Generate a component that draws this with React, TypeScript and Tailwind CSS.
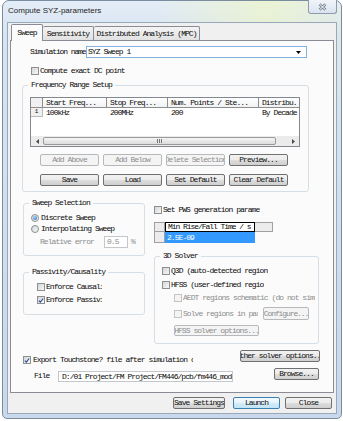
import clsx from "clsx";
import type { ReactNode } from "react";

const BTN = {
  normal:
    "border-[#707070] bg-[linear-gradient(#f2f2f2_0%,#ebebeb_50%,#dddddd_51%,#cfcfcf_100%)] text-[#111]",
  off: "border-[#b5b9bc] bg-[#f4f4f4] text-[#8d8d8d]",
  def: "border-[#3c7fb1] bg-[linear-gradient(#f4fafe_0%,#e5f3fb_50%,#d2ebf9_51%,#c4e4f6_100%)] text-[#111]",
};

function Button({
  label,
  className,
  kind = "normal",
}: {
  label: string;
  className: string;
  kind?: keyof typeof BTN;
}) {
  return (
    <div
      className={clsx(
        "flex shrink-0 items-center justify-center overflow-hidden whitespace-nowrap rounded-[2px] border",
        BTN[kind],
        className
      )}
    >
      {label}
    </div>
  );
}

function Check({ on, off }: { on?: boolean; off?: boolean }) {
  return (
    <span
      className={clsx(
        "flex h-[8px] w-[8px] shrink-0 items-center justify-center border",
        off
          ? "border-[#c2c4c6] bg-[#f4f4f4]"
          : "border-[#8e8f8f] bg-[linear-gradient(135deg,#d2d5da,#f8f8f8)]"
      )}
    >
      {on && (
        <svg viewBox="0 0 8 8" className="h-[7px] w-[7px]">
          <path d="M1.2 4.1 L3.1 6.1 L6.9 1.3" fill="none" stroke="#2b4a9c" strokeWidth="1.5" />
        </svg>
      )}
    </span>
  );
}

function Radio({ on }: { on?: boolean }) {
  return (
    <span className="flex h-[8px] w-[8px] shrink-0 items-center justify-center rounded-full border border-[#8e8f8f] bg-[linear-gradient(135deg,#d2d5da,#f8f8f8)]">
      {on && (
        <span className="h-[4px] w-[4px] rounded-full bg-[radial-gradient(circle_at_40%_35%,#a9dbff,#1b5fb5)]" />
      )}
    </span>
  );
}

function Group({
  title,
  className,
  children,
}: {
  title: string;
  className: string;
  children: ReactNode;
}) {
  return (
    <fieldset className={clsx("flex flex-col items-start rounded-[3px] border border-[#d5dfe5]", className)}>
      <legend className="ml-[5px] px-[3px] leading-[8px]">{title}</legend>
      {children}
    </fieldset>
  );
}

function Clip({ text, className }: { text: string; className: string }) {
  return <span className={clsx("block overflow-hidden whitespace-nowrap", className)}>{text}</span>;
}

function FreqTable() {
  const head = "flex items-center overflow-hidden whitespace-nowrap border-r border-[#8e8e8e] pl-[3px]";
  const cell = "flex items-center overflow-hidden whitespace-nowrap pl-[3px]";
  return (
    <div className="ml-[7px] mt-[8px] flex h-[50px] w-[270px] flex-col overflow-hidden border border-[#828790] bg-white">
      <div className="flex h-[10px] shrink-0 border-b border-[#8e8e8e] bg-[linear-gradient(#ffffff,#f1f2f4)]">
        <div className="w-[12px] shrink-0 border-r border-[#8e8e8e] bg-[#f0f0f0]" />
        <div className={clsx(head, "w-[64px] shrink-0")}>Start Freq...</div>
        <div className={clsx(head, "w-[61px] shrink-0")}>Stop Freq...</div>
        <div className={clsx(head, "w-[91px] shrink-0")}>Num. Points / Ste...</div>
        <div className={clsx(head, "w-[60px] shrink-0")}>Distribu.</div>
      </div>
      <div className="flex h-[9px] shrink-0">
        <div className="flex w-[12px] shrink-0 items-center justify-center border-r border-b border-[#b9b9b9] bg-[#f0f0f0] text-[6px] tracking-normal">
          1
        </div>
        <div className={clsx(cell, "w-[64px] shrink-0")}>100kHz</div>
        <div className={clsx(cell, "w-[61px] shrink-0")}>200MHz</div>
        <div className={clsx(cell, "w-[91px] shrink-0")}>200</div>
        <div className={clsx(cell, "w-[60px] shrink-0")}>By Decade</div>
      </div>
      <div className="flex-1" />
      <div className="flex h-[10px] shrink-0 items-center bg-[#ebebeb]">
        <div className="flex w-[12px] justify-center">
          <svg width="3" height="5" viewBox="0 0 3 5">
            <path d="M3 0v5L0 2.5z" fill="#4a4a4a" />
          </svg>
        </div>
        <div className="flex h-[8px] w-[233px] items-center justify-center gap-[1px] rounded-[2px] border border-[#9a9a9a] bg-[linear-gradient(#f5f5f5,#dcdcdc)]">
          <span className="h-[4px] w-[1px] bg-[#777]" />
          <span className="h-[4px] w-[1px] bg-[#777]" />
          <span className="h-[4px] w-[1px] bg-[#777]" />
        </div>
        <div className="flex-1" />
        <div className="flex w-[12px] justify-center">
          <svg width="3" height="5" viewBox="0 0 3 5">
            <path d="M0 0v5L3 2.5z" fill="#4a4a4a" />
          </svg>
        </div>
      </div>
    </div>
  );
}

function Panel() {
  return (
    <div className="mx-[2px] flex h-[353px] shrink-0 flex-col items-start border border-[#898c95] bg-[#fbfbfb]">
      <div className="ml-[19px] mt-[5px] flex h-[12px] items-center">
        <span className="w-[56px] whitespace-nowrap tracking-[-1.1px]">Simulation name</span>
        <div className="flex h-[12px] w-[221px] items-center justify-between border border-[#85b1de] bg-white pl-[1px] pr-[5px]">
          <span>SYZ Sweep 1</span>
          <svg width="5" height="3" viewBox="0 0 5 3">
            <path d="M0 0h5L2.5 3z" fill="#000" />
          </svg>
        </div>
      </div>

      <div className="ml-[20px] mt-[9px] flex items-center gap-[1px]">
        <Check />
        <span>Compute exact DC point</span>
      </div>

      <Group title="Frequency Range Setup" className="ml-[11px] mt-[6px] h-[111px] w-[287px]">
        <FreqTable />
        <div className="ml-[17px] mt-[7px] flex gap-[4px]">
          <Button label="Add Above" kind="off" className="h-[12px] w-[59px]" />
          <Button label="Add Below" kind="off" className="h-[12px] w-[59px]" />
          <Button label="Delete Selection" kind="off" className="h-[12px] w-[59px]" />
          <Button label="Preview..." className="h-[12px] w-[59px]" />
        </div>
        <div className="ml-[17px] mt-[8px] flex gap-[4px]">
          <Button label="Save" className="h-[12px] w-[59px]" />
          <Button label="Load" className="h-[12px] w-[59px]" />
          <Button label="Set Default" className="h-[12px] w-[59px]" />
          <Button label="Clear Default" className="h-[12px] w-[59px]" />
        </div>
      </Group>

      <div className="ml-[12px] mt-[7px] flex items-start gap-[9px]">
        <div className="flex w-[122px] flex-col">
          <Group title="Sweep Selection" className="h-[57px] w-[122px]">
            <div className="ml-[7px] mt-[7px] flex items-center gap-[2px]">
              <Radio on />
              <span>Discrete Sweep</span>
            </div>
            <div className="ml-[7px] mt-[3px] flex items-center gap-[2px]">
              <Radio />
              <span>Interpolating Sweep</span>
            </div>
            <div className="ml-[16px] mt-[3px] flex h-[12px] items-center text-[#8d8d8d]">
              <span className="w-[64px]">Relative error</span>
              <div className="flex h-[12px] w-[24px] items-center border border-[#c4c7cc] bg-white pl-[2px]">0.5</div>
              <span className="ml-[3px]">%</span>
            </div>
          </Group>
          <Group title="Passivity/Causality" className="mt-[12px] h-[47px] w-[122px]">
            <div className="ml-[13px] mt-[7px] flex items-center gap-[1px]">
              <Check />
              <Clip text="Enforce Causality" className="w-[56px]" />
            </div>
            <div className="ml-[13px] mt-[5px] flex items-center gap-[1px]">
              <Check on />
              <Clip text="Enforce Passivity" className="w-[56px]" />
            </div>
          </Group>
        </div>

        <div className="flex w-[165px] flex-col">
          <div className="mt-[7px] flex items-center gap-[1px]">
            <Check />
            <Clip text="Set PWS generation parameters" className="w-[97px]" />
          </div>
          <div className="mt-[8px] flex flex-col">
            <div className="flex h-[10px]">
              <div className="w-[11px] border border-[#a0a0a0] bg-[#ececec]" />
              <div className="flex w-[90px] items-center whitespace-nowrap border border-black bg-white pl-[2px] tracking-[-1.05px]">
                Min Rise/Fall Time / s
              </div>
              <div className="w-[18px] border-y border-r border-[#a0a0a0] bg-[#ececec]" />
            </div>
            <div className="flex h-[11px]">
              <div className="w-[11px] border-x border-b border-[#a0a0a0] bg-[#ececec]" />
              <div className="flex w-[90px] items-center bg-[#3399ff] pl-[2px] text-white">2.5E-09</div>
            </div>
          </div>
          <Group title="3D Solver" className="mt-[9px] h-[92px] w-[165px]">
            <div className="ml-[7px] mt-[7px] flex items-center gap-[1px]">
              <Check />
              <Clip text="Q3D (auto-detected region)" className="w-[97px]" />
            </div>
            <div className="ml-[7px] mt-[6px] flex items-center gap-[1px]">
              <Check />
              <Clip text="HFSS (user-defined region)" className="w-[93px]" />
            </div>
            <div className="ml-[19px] mt-[5px] flex items-center gap-[1px] text-[#8d8d8d]">
              <Check off />
              <Clip text="AEDT regions schematic (do not simulate)" className="w-[132px]" />
            </div>
            <div className="ml-[19px] mt-[5px] flex h-[13px] items-center text-[#8d8d8d]">
              <Check off />
              <Clip text="Solve regions in parallel" className="ml-[1px] w-[75px]" />
              <Button label="Configure..." kind="off" className="ml-[5px] h-[13px] w-[46px] tracking-[-1.1px]" />
            </div>
            <Button label="HFSS solver options..." kind="off" className="ml-[19px] mt-[5px] h-[11px] w-[85px]" />
          </Group>
        </div>
      </div>

      <div className="ml-[12px] mt-[6px] flex w-[297px] items-start justify-between">
        <div className="mt-[6px] flex items-center gap-[2px]">
          <Check on />
          <Clip text="Export Touchstone? file after simulation completes" className="w-[160px]" />
        </div>
        <Button label="Other solver options..." className="h-[12px] w-[80px]" />
      </div>

      <div className="ml-[12px] mt-[4px] flex items-start">
        <span className="ml-[11px] mt-[4px] w-[24px]">File</span>
        <div className="mt-[3px] flex h-[11px] w-[175px] items-center overflow-hidden whitespace-nowrap border border-[#c4c7cc] bg-white pl-[3px]">
          D:/01 Project/FM Project/FM446/pcb/fm446_model.s4p
        </div>
        <Button label="Browse..." className="ml-[41px] h-[12px] w-[45px]" />
      </div>
    </div>
  );
}

export default function App() {
  return (
    <div className="h-[421px] w-[343px] overflow-hidden bg-white pl-[2px] font-['Liberation_Mono','DejaVu_Sans_Mono',monospace] text-[8px] leading-[8px] tracking-[-0.95px] text-[#0a0a0a]">
      <div className="flex h-[419px] w-[340px] flex-col rounded-t-[7px] rounded-b-[5px] border border-[#7a8ca0] bg-[radial-gradient(ellipse_at_78%_0%,rgba(236,244,206,0.85),rgba(236,244,206,0)_30%),linear-gradient(180deg,#e4edf7_0%,#d7e4f2_8%,#c9d9eb_100%)] px-[4px] pb-[4px]">
        <div className="flex h-[21px] shrink-0 items-start pl-[1px]">
          <span className="mt-[6px] font-['Liberation_Sans',Arial,sans-serif] text-[8px] tracking-normal text-[#1e1e1e]">
            Compute SYZ-parameters
          </span>
          <div className="-mt-[1px] ml-auto flex h-[14px] w-[29px] items-center justify-center rounded-b-[3px] border border-t-0 border-[#8d9aab] bg-[linear-gradient(#f1f5fa,#dae4ef)]">
            <svg width="9" height="8" viewBox="0 0 9 8">
              <path d="M1.5 1.2 L7.5 6.8 M7.5 1.2 L1.5 6.8" stroke="#7d8896" strokeWidth="2.6" />
              <path d="M1.5 1.2 L7.5 6.8 M7.5 1.2 L1.5 6.8" stroke="#f7f9fb" strokeWidth="1" />
            </svg>
          </div>
        </div>
        <div className="flex flex-1 flex-col border border-[#97a8bb] bg-[#f0f0f0]">
          <div className="mt-[1px] flex h-[16px] shrink-0 items-end pl-[3px]">
            <div className="relative z-10 -mb-[1px] flex h-[17px] w-[32px] items-center justify-center rounded-t-[2px] border border-b-0 border-[#898c95] bg-[#fbfbfb]">
              Sweep
            </div>
            <div className="flex h-[14px] w-[51px] items-center justify-center rounded-t-[2px] border border-b-0 border-l-0 border-[#898c95] bg-[linear-gradient(#f4f4f4,#e1e1e1)]">
              Sensitivity
            </div>
            <div className="flex h-[14px] w-[106px] items-center justify-center whitespace-nowrap rounded-t-[2px] border border-b-0 border-l-0 border-[#898c95] bg-[linear-gradient(#f4f4f4,#e1e1e1)]">
              Distributed Analysis (MPC)
            </div>
          </div>
          <Panel />
          <div className="flex flex-1 items-start justify-end pr-[4px] pt-[4px]">
            <Button label="Save Settings" className="h-[12px] w-[52px]" />
            <Button label="Launch" kind="def" className="ml-[8px] h-[12px] w-[47px]" />
            <Button label="Close" className="ml-[5px] h-[12px] w-[47px]" />
          </div>
        </div>
      </div>
    </div>
  );
}
